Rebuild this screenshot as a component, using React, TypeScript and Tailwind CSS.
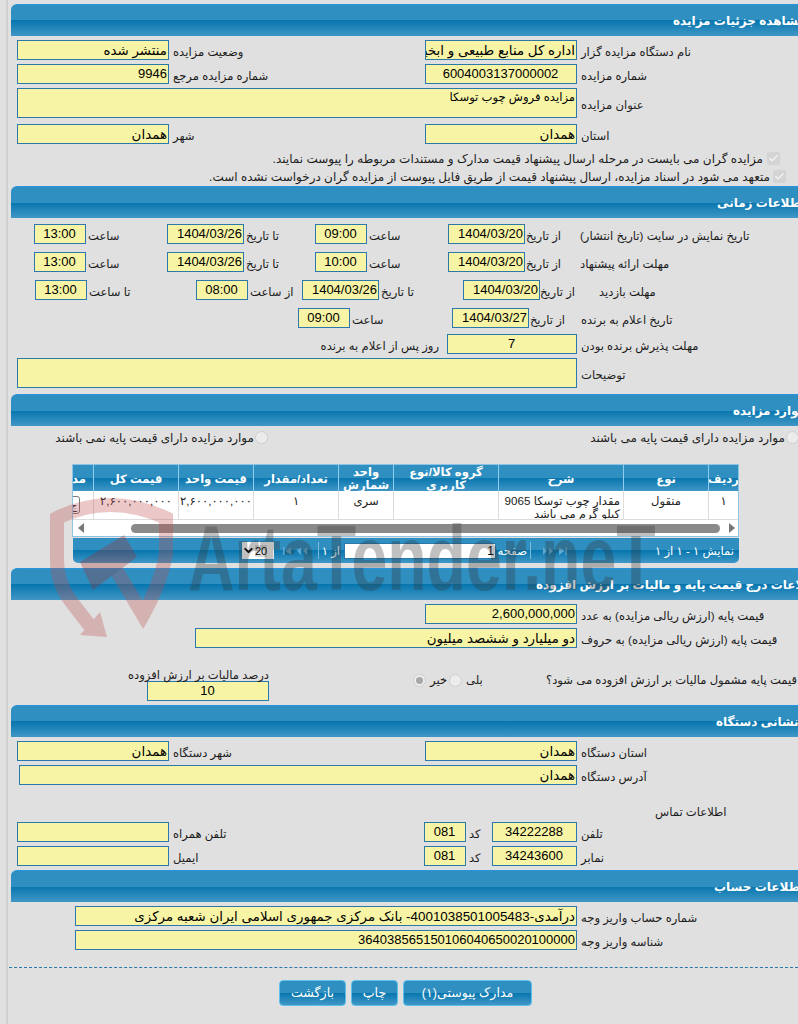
import type { ReactNode } from 'react'
import { Check, ChevronDown } from 'lucide-react'

const barBg = 'bg-[linear-gradient(#2e8fc0_50%,#0876ae_50%,#4097c6)]'

function Header({ title, indent }: { title: string; indent: string }) {
  // titles run past the right edge of the window in the picture, so they are placed from the left
  return (
    <div className={`ml-[3px] flex h-8 w-[820px] items-center rounded-tl-[6px] border-t border-[#2a93dd] ${barBg} ${indent}`}>
      <span dir="rtl" className="whitespace-nowrap text-[12px] font-bold text-white">
        {title}
      </span>
    </div>
  )
}

function Box({ className = '', fa = false, children }: { className?: string; fa?: boolean; children?: ReactNode }) {
  return (
    <div
      dir="rtl"
      className={`flex h-5 shrink-0 items-center overflow-hidden whitespace-nowrap border border-[#2b78ab] bg-[#f7f5a5] pr-px text-black ${fa ? 'pt-[2px] text-[13.4px] leading-[16px]' : 'text-[13px] leading-[16px]'} ${className}`}
    >
      {children}
    </div>
  )
}

function Label({ className = '', children }: { className?: string; children: ReactNode }) {
  return (
    <span dir="rtl" className={`h-5 shrink-0 whitespace-nowrap text-left text-[11.6px] leading-[23px] text-[#1c1c1c] ${className}`}>
      {children}
    </span>
  )
}

function Row({ className = '', children }: { className?: string; children: ReactNode }) {
  return <div className={`flex items-center ${className}`}>{children}</div>
}

function Radio({ checked = false }: { checked?: boolean }) {
  return (
    <span className="flex h-[13px] w-[13px] shrink-0 items-center justify-center rounded-full border border-[#d0d0d0] bg-[#ececec]">
      {checked && <span className="h-[7px] w-[7px] rounded-full bg-[#a8a8a8]" />}
    </span>
  )
}

function Tick() {
  return (
    <span className="flex h-[13px] w-[13px] shrink-0 items-center justify-center rounded-[2px] bg-[#d4d4d4]">
      <Check size={11} strokeWidth={3} className="text-[#f2f2f2]" />
    </span>
  )
}

function TimeSlot({ label, gap = 'w-[33px]' }: { label: string; gap?: string }) {
  return <Label className={`ml-[2px] ${gap}`}>{label}</Label>
}

const columns = [
  { title: 'مد', width: 'w-[20px]', value: '' },
  { title: 'قیمت کل', width: 'w-[85px]', value: '۲,۶۰۰,۰۰۰,۰۰۰' },
  { title: 'قیمت واحد', width: 'w-[75px]', value: '۲,۶۰۰,۰۰۰,۰۰۰' },
  { title: 'تعداد/مقدار', width: 'w-[85px]', value: '۱' },
  { title: 'واحد شمارش', width: 'w-[55px]', value: 'سری' },
  { title: 'گروه کالا/نوع کاربری', width: 'w-[105px]', value: '' },
  { title: 'شرح', width: 'w-[125px]', value: 'مقدار چوب توسکا 9065\nکیلو گرم می باشد' },
  { title: 'نوع', width: 'w-[85px]', value: 'منقول' },
  { title: 'ردیف', width: 'w-[30px]', value: '۱' },
]

function NavIcons({ flip = false }: { flip?: boolean }) {
  return (
    <svg width="30" height="10" viewBox="0 0 30 10" className={`shrink-0 text-[#5fa9d0] ${flip ? 'rotate-180' : ''}`} fill="currentColor">
      <path d="M1 1h1.5v8H1zM9 1v8L3.5 5zM19 1v8l-4-4zM25 1v8l-4-4z" />
    </svg>
  )
}

function ItemsTable() {
  return (
    <div className="ml-[64px] mt-5 w-[667px] overflow-hidden border border-[#8fc3e5] bg-white">
      <div className="flex h-[26px]">
        {columns.map((c) => (
          <div
            key={c.title}
            dir="rtl"
            className={`flex shrink-0 items-center justify-center overflow-hidden border-l border-[#8fcdf0] text-center text-[11.6px] font-bold leading-[13px] text-white first:border-l-0 ${barBg} ${c.width}`}
          >
            <span className={c.title === 'مد' ? 'whitespace-nowrap pr-2' : ''}>{c.title}</span>
          </div>
        ))}
      </div>
      <div className="flex h-[29px] border-b border-[#dcdcdc]">
        {columns.map((c, i) => (
          <div
            key={c.title}
            dir="rtl"
            className={`shrink-0 overflow-hidden whitespace-pre-wrap border-l border-[#dcdcdc] pt-[3px] text-[11.6px] leading-[13px] text-[#222] first:border-l-0 ${c.width} ${i === 6 ? 'px-[3px] text-right' : 'text-center'}`}
          >
            {i === 0 ? (
              <div dir="ltr">
                <div className="-ml-[5px] mt-[2px] flex h-[18px] w-3 items-center justify-center rounded-[3px] border border-[#777] bg-white text-[10px]">
                  ج
                </div>
              </div>
            ) : (
              <span className={i < 3 ? 'whitespace-nowrap' : ''}>{c.value}</span>
            )}
          </div>
        ))}
      </div>
      <div className="flex h-4 items-center">
        <span className="ml-[5px] h-0 w-0 border-y-[5px] border-r-[6px] border-y-transparent border-r-[#777]" />
        <div className="ml-[47px] h-[9px] w-[589px] rounded-full bg-[#8a8a8a]" />
        <span className="ml-[9px] h-0 w-0 border-y-[5px] border-l-[6px] border-y-transparent border-l-[#777]" />
      </div>
    </div>
  )
}

function Pager() {
  return (
    <div className={`ml-[65px] mt-px flex h-[25px] w-[666px] items-center rounded-b-[5px] text-[12px] text-white ${barBg}`}>
      <div className="ml-[169px] flex h-[17px] w-8 shrink-0 items-center bg-white text-black">
        <ChevronDown size={13} strokeWidth={3.5} className="shrink-0" />
        <span className="h-3 bg-[#dcdcdc] text-[11px] leading-3">20</span>
      </div>
      <span className="ml-2">
        <NavIcons />
      </span>
      <span className="ml-[6px] h-[17px] w-px bg-[#7db9da]" />
      <Label className="ml-[5px] w-[16px] !leading-[20px] !text-white">از ۱</Label>
      <div className="ml-[4px] flex h-[16px] w-[152px] shrink-0 items-center justify-end border border-[#2b78ab] bg-white pr-px text-black">1</div>
      <Label className="ml-[2px] w-[29px] !leading-[20px] !text-white">صفحه</Label>
      <span className="ml-[3px] h-[17px] w-px bg-[#7db9da]" />
      <span className="ml-[7px]">
        <NavIcons flip />
      </span>
      <Label className="ml-[90px] w-[76px] !leading-[20px] !text-white">نمایش ۱ - ۱ از ۱</Label>
    </div>
  )
}

function Watermark() {
  return (
    <div className="pointer-events-none absolute left-0 top-0 h-full w-full">
      <svg width="798" height="1024" className="absolute left-0 top-0">
        <g opacity="0.3">
          <path
            d="M90 626 L70 600 Q57 582 57 560 L57 518 Q110 492 166 518 L166 555 Q160 585 143 615 L114 566"
            fill="none"
            stroke="#bf4a4a"
            strokeWidth="14"
          />
          <path d="M100 612 L107 637 L80 635Z" fill="#bf4a4a" />
          <path d="M80 562 L124 535 L137 557 L93 590Z" fill="#a32a2a" />
        </g>
      </svg>
      <span className="absolute left-[188px] top-[512px] origin-left scale-x-[0.7] whitespace-nowrap text-[92px] font-bold leading-none text-[#333] opacity-30">
        ArtaTender.neT
      </span>
    </div>
  )
}

export default function App() {
  return (
    <div className="relative h-[1024px] w-[798px] overflow-hidden bg-[#e0e0e0] pl-[6px] text-[13px] [font-family:'Liberation_Sans','DejaVu_Sans',sans-serif]">
      <div className="h-full border-l-2 border-[#cfcfcf] pt-1">
        <Header title="مشاهده جزئیات مزایده" indent="pl-[662px]" />
        <Row className="mt-1">
          <Box fa className="ml-[9px] w-[152px]">منتشر شده</Box>
          <Label className="w-[256px] pl-1">وضعیت مزایده</Label>
          <Box fa className="w-[152px]">اداره کل منابع طبیعی و ابخیزداری استان همدان</Box>
          <Label className="pl-1">نام دستگاه مزایده گزار</Label>
        </Row>
        <Row className="mt-1">
          <Box className="ml-[9px] w-[152px]">9946</Box>
          <Label className="w-[256px] pl-1">شماره مزایده مرجع</Label>
          <Box className="w-[152px] justify-center">6004003137000002</Box>
          <Label className="pl-1">شماره مزایده</Label>
        </Row>
        <Row className="mt-1">
          <Box className="ml-[9px] !h-[30px] w-[560px] !items-start !text-[11.6px]">مزایده فروش چوب توسکا</Box>
          <Label className="pl-1">عنوان مزایده</Label>
        </Row>
        <Row className="mt-[6px]">
          <Box fa className="ml-[9px] w-[152px]">همدان</Box>
          <Label className="w-[256px] pl-1">شهر</Label>
          <Box fa className="w-[152px]">همدان</Box>
          <Label className="pl-1">استان</Label>
        </Row>
        <div className="mt-[5px] flex h-[18px] items-center justify-end gap-1 pr-[18px]">
          <Label className="!text-[12px]">مزایده گران می بایست در مرحله ارسال پیشنهاد قیمت مدارک و مستندات مربوطه را پیوست نمایند.</Label>
          <Tick />
        </div>
        <div className="flex h-[18px] items-center justify-end gap-[3px] pr-3">
          <Label className="!text-[12px]">متعهد می شود در اسناد مزایده، ارسال پیشنهاد قیمت از طریق فایل پیوست از مزایده گران درخواست نشده است.</Label>
          <Tick />
        </div>

        <div className="mt-px" />
        <Header title="اطلاعات زمانی" indent="pl-[706px]" />
        <Row className="mt-[6px]">
          <Box className="ml-[26px] w-[52px] justify-center">13:00</Box>
          <TimeSlot label="ساعت" />
          <Box className="ml-[46px] w-[77px]">1404/03/26</Box>
          <TimeSlot label="تا تاریخ" />
          <Box className="ml-[36px] w-[52px] justify-center">09:00</Box>
          <TimeSlot label="ساعت" gap="w-[34px]" />
          <Box className="ml-[45px] w-[77px]">1404/03/20</Box>
          <TimeSlot label="از تاریخ" gap="w-[34px]" />
          <Label className="ml-[19px]">تاریخ نمایش در سایت (تاریخ انتشار)</Label>
        </Row>
        <Row className="mt-2">
          <Box className="ml-[26px] w-[52px] justify-center">13:00</Box>
          <TimeSlot label="ساعت" />
          <Box className="ml-[46px] w-[77px]">1404/03/26</Box>
          <TimeSlot label="تا تاریخ" />
          <Box className="ml-[36px] w-[52px] justify-center">10:00</Box>
          <TimeSlot label="ساعت" gap="w-[34px]" />
          <Box className="ml-[45px] w-[77px]">1404/03/20</Box>
          <TimeSlot label="از تاریخ" gap="w-[34px]" />
          <Label className="ml-[19px]">مهلت ارائه پیشنهاد</Label>
        </Row>
        <Row className="mt-2">
          <Box className="ml-[27px] w-[52px] justify-center">13:00</Box>
          <TimeSlot label="تا ساعت" gap="w-[45px]" />
          <Box className="ml-[62px] w-[52px] justify-center">08:00</Box>
          <TimeSlot label="از ساعت" gap="w-[45px]" />
          <Box className="ml-[7px] w-[77px]">1404/03/26</Box>
          <TimeSlot label="تا تاریخ" gap="w-[34px]" />
          <Box className="ml-[48px] w-[77px]">1404/03/20</Box>
          <TimeSlot label="از تاریخ" />
          <Label className="ml-[24px]">مهلت بازدید</Label>
        </Row>
        <Row className="mt-2">
          <Box className="ml-[290px] w-[52px] justify-center">09:00</Box>
          <TimeSlot label="ساعت" gap="w-[34px]" />
          <Box className="ml-[66px] w-[77px]">1404/03/27</Box>
          <TimeSlot label="از تاریخ" gap="w-[34px]" />
          <Label className="ml-[16px]">تاریخ اعلام به برنده</Label>
        </Row>
        <Row className="mt-[6px]">
          <Label className="ml-[312px] w-[119px] !text-right">روز پس از اعلام به برنده</Label>
          <Box className="ml-2 w-[130px] justify-center">7</Box>
          <Label className="pl-1">مهلت پذیرش برنده بودن</Label>
        </Row>
        <Row className="mt-1">
          <Box className="ml-[9px] !h-[30px] w-[560px]" />
          <Label className="pl-1">توضیحات</Label>
        </Row>

        <div className="mt-[6px]" />
        <Header title="موارد مزایده" indent="pl-[722px]" />
        <Row className="mt-1 h-[14px]">
          <Label className="ml-[46px] w-[200px] !text-right !text-[12px]">موارد مزایده دارای قیمت پایه نمی باشند</Label>
          <span className="ml-px">
            <Radio />
          </span>
          <Label className="ml-[323px] w-[194px] !text-right !text-[12px]">موارد مزایده دارای قیمت پایه می باشند</Label>
          <span className="ml-px">
            <Radio />
          </span>
        </Row>
        <ItemsTable />
        <Pager />

        <div className="mt-[5px]" />
        <Header title="اطلاعات درج قیمت پایه و مالیات بر ارزش افزوده" indent="pl-[525px]" />
        <Row className="mt-1">
          <Box className="ml-[417px] w-[152px]">2,600,000,000</Box>
          <Label className="pl-1">قیمت پایه (ارزش ریالی مزایده) به عدد</Label>
        </Row>
        <Row className="mt-1">
          <Box fa className="ml-[187px] w-[382px]">دو میلیارد و ششصد میلیون</Box>
          <Label className="pl-1">قیمت پایه (ارزش ریالی مزایده) به حروف</Label>
        </Row>
        <div className="mt-5 flex items-end">
          <div className="ml-[139px] w-[122px]">
            <div dir="rtl" className="h-[13px] whitespace-nowrap text-right text-[11.6px] leading-[13px] text-[#1c1c1c]">
              درصد مالیات بر ارزش افزوده
            </div>
            <Box className="w-[122px] justify-center">10</Box>
          </div>
          <div className="flex items-center pb-[11px]">
            <span className="ml-[144px]">
              <Radio checked />
            </span>
            <Label className="ml-[4px] w-[18px] !leading-[20px]">خیر</Label>
            <span className="ml-px">
              <Radio />
            </span>
            <Label className="ml-[4px] w-[20px] !leading-[20px]">بلی</Label>
            <Label className="ml-[60px] !leading-[20px]">قیمت پایه مشمول مالیات بر ارزش افزوده می شود؟</Label>
          </div>
        </div>

        <div className="mt-1" />
        <Header title="نشانی دستگاه" indent="pl-[705px]" />
        <Row className="mt-1">
          <Box fa className="ml-[9px] w-[152px]">همدان</Box>
          <Label className="w-[256px] pl-1">شهر دستگاه</Label>
          <Box fa className="w-[152px]">همدان</Box>
          <Label className="pl-1">استان دستگاه</Label>
        </Row>
        <Row className="mt-1">
          <Box fa className="ml-[11px] w-[558px]">همدان</Box>
          <Label className="pl-1">آدرس دستگاه</Label>
        </Row>
        <Row className="mt-[19px] h-4">
          <Label className="ml-[647px] !leading-[20px]">اطلاعات تماس</Label>
        </Row>
        <Row className="mt-[2px]">
          <Box className="ml-[9px] w-[152px]" />
          <Label className="w-[255px] pl-1">تلفن همراه</Label>
          <Box className="w-[42px] justify-center">081</Box>
          <Label className="w-[26px] pl-[3px]">کد</Label>
          <Box className="w-[85px] justify-center">34222288</Box>
          <Label className="pl-1">تلفن</Label>
        </Row>
        <Row className="mt-1">
          <Box className="ml-[9px] w-[152px]" />
          <Label className="w-[255px] pl-1">ایمیل</Label>
          <Box className="w-[42px] justify-center">081</Box>
          <Label className="w-[26px] pl-[3px]">کد</Label>
          <Box className="w-[85px] justify-center">34243600</Box>
          <Label className="pl-1">نمابر</Label>
        </Row>

        <div className="mt-1" />
        <Header title="اطلاعات حساب" indent="pl-[703px]" />
        <Row className="mt-1">
          <Box fa className="ml-[67px] w-[502px]">درآمدی-4001038501005483- بانک مرکزی جمهوری اسلامی ایران شعبه مرکزی</Box>
          <Label className="pl-1">شماره حساب واریز وجه</Label>
        </Row>
        <Row className="mt-1">
          <Box className="ml-[67px] w-[502px]">364038565150106040650020100000</Box>
          <Label className="pl-1">شناسه واریز وجه</Label>
        </Row>

        <div className="ml-px mt-[17px] border-t border-dashed border-[#2b78ab]" />
        <div className="ml-[271px] mt-3 flex gap-[5px] text-[12.6px] text-white">
          <button className={`h-[26px] w-[67px] rounded-[4px] border border-[#5cc0ea] ${barBg}`}>بازگشت</button>
          <button className={`h-[26px] w-[47px] rounded-[4px] border border-[#5cc0ea] ${barBg}`}>چاپ</button>
          <button className={`h-[26px] w-[129px] rounded-[4px] border border-[#5cc0ea] ${barBg}`}>مدارک پیوستی(۱)</button>
        </div>
      </div>
      <Watermark />
    </div>
  )
}
